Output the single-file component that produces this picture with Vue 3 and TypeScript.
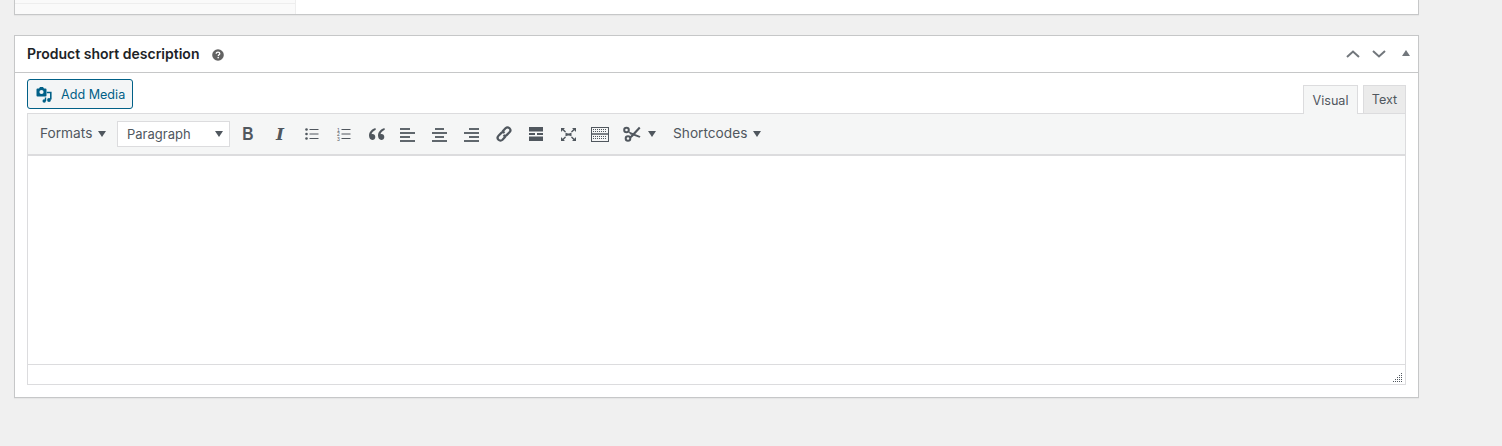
<script setup lang="ts">
  // [start x, end x] of the four rows in each align icon
  const alignRows: Record<string, number[][]> = {
    left: [[0, 10], [0, 15], [0, 10], [0, 15]],
    center: [[3, 12], [0, 15], [3, 12], [0, 15]],
    right: [[5, 15], [0, 15], [5, 15], [0, 15]]
  }
  const aligns = ['left', 'center', 'right']
</script>

<template>
  <div class="page">
    <div class="box top-box">
      <div class="top-tabs"></div>
    </div>

    <div class="box">
      <div class="box-head">
        <h2>Product short description</h2>
        <svg class="help" width="12" height="12" viewBox="0 0 12 12">
          <circle cx="6" cy="6" r="5.8" fill="#636363" />
          <path d="M4.2 4.7c0-1 .8-1.6 1.8-1.6s1.800.6 1.800 1.500c0 1.300-1.500 1.200-1.500 2.400" fill="none" stroke="#fff" stroke-width="1.3" />
          <rect x="5.500" y="7.900" width="1.400" height="1.400" fill="#fff" />
        </svg>
        <div class="head-actions">
          <svg width="14" height="8" viewBox="0 0 14 8"><path d="M1 7l6-5.500L13 7" fill="none" stroke="#72777c" stroke-width="2" /></svg>
          <svg width="14" height="8" viewBox="0 0 14 8"><path d="M1 1l6 5.500L13 1" fill="none" stroke="#72777c" stroke-width="2" /></svg>
          <span class="tri"></span>
        </div>
      </div>

      <div class="box-body">
        <div class="editor-top">
          <button class="add-media">
            <svg width="18" height="17" viewBox="0 0 18 17">
              <path d="M1.500 2.500h1.500l1-1.500h3l1 1.500h1.500a1 1 0 0 1 1 1v6a1 1 0 0 1-1 1h-8a1 1 0 0 1-1-1v-6a1 1 0 0 1 1-1z" fill="#016087" />
              <circle cx="5.500" cy="6" r="2.100" fill="#f3f5f6" />
              <path d="M10.800 6.500h4v7" fill="none" stroke="#016087" stroke-width="1.600" />
              <path d="M9.500 11.500v3.500" fill="none" stroke="#016087" stroke-width="1.400" />
              <circle cx="13" cy="14" r="1.900" fill="#016087" />
              <circle cx="8.200" cy="15" r="1.700" fill="#016087" />
            </svg>
            Add Media
          </button>
          <div class="tabs">
            <span class="tab active">Visual</span>
            <span class="tab">Text</span>
          </div>
        </div>

        <div class="editor">
          <div class="toolbar">
            <span class="menu formats">Formats<i class="caret"></i></span>
            <span class="select">Paragraph<i class="caret"></i></span>

            <span class="btn b"><span>B</span></span>
            <span class="btn i">I</span>

            <span class="btn">
              <svg width="16" height="16" viewBox="0 0 16 16">
                <circle cx="2.500" cy="3.500" r="1.300" fill="#50575e" />
                <circle cx="2.500" cy="8" r="1.300" fill="#50575e" />
                <circle cx="2.500" cy="12.500" r="1.300" fill="#50575e" />
                <path d="M5.500 3.500h9M5.500 8h9M5.500 12.500h9" stroke="#50575e" />
              </svg>
            </span>
            <span class="btn">
              <svg width="16" height="16" viewBox="0 0 16 16">
                <text x="1" y="5.600" class="num">1</text>
                <text x="1" y="10.100" class="num">2</text>
                <text x="1" y="14.600" class="num">3</text>
                <path d="M5.500 3.500h9M5.500 8h9M5.500 12.500h9" stroke="#50575e" />
              </svg>
            </span>
            <span class="btn">
              <svg width="17" height="14" viewBox="0 0 17 14">
                <path d="M7.400 1C4.200 2 1 4.600 1 8.600 1 11.400 2.500 13 4.300 13c1.700 0 3-1.300 3-3s-1.200-2.900-2.800-2.900c-.4 0-.8.100-1 .2.300-1.700 2-3.500 4.300-4.500zM16.400 1c-3.200 1-6.400 3.600-6.400 7.600 0 2.800 1.500 4.400 3.300 4.400 1.700 0 3-1.300 3-3s-1.200-2.900-2.800-2.900c-.4 0-.8.100-1 .2.300-1.700 2-3.500 4.300-4.500z" fill="#50575e" />
              </svg>
            </span>

            <span v-for="a in aligns" :key="a" class="btn">
              <svg class="align" width="15" height="14" viewBox="0 0 15 14">
                <path
                  v-for="(r, n) in alignRows[a]"
                  :key="n"
                  :d="`M${r[0]} ${1 + n * 4}H${r[1]}`"
                  stroke="#50575e"
                  stroke-width="1.800"
                />
              </svg>
            </span>

            <span class="btn">
              <svg width="18" height="18" viewBox="0 0 18 18">
                <g fill="none" stroke="#50575e" stroke-width="2.200">
                  <path d="M7.500 6.500l3-3.200c1.100-1.100 2.900-1.100 4 0s1.100 2.900 0 4l-2.600 2.600c-1 1-2.500 1-3.500.2" />
                  <path d="M10.500 11.500l-3 3.200c-1.100 1.100-2.900 1.100-4 0s-1.100-2.900 0-4l2.600-2.600c1-1 2.500-1 3.500-.2" />
                </g>
              </svg>
            </span>
            <span class="btn">
              <svg width="16" height="14" viewBox="0 0 16 14">
                <rect x="1" y="0" width="14" height="4.500" fill="#50575e" />
                <rect x="1" y="6" width="6" height="2" fill="#50575e" />
                <rect x="9" y="6" width="6" height="2" fill="#50575e" />
                <rect x="1" y="9.500" width="14" height="4.500" fill="#50575e" />
              </svg>
            </span>
            <span class="btn">
              <svg width="17" height="15" viewBox="0 0 17 15">
                <path d="M1 1h4L3.700 2.300 6 4.600 5 5.500 2.600 3.300 1 5zM16 1v4l-1.600-1.700L12 5.500l-1-.9 2.300-2.300L12 1zM1 14v-4l1.600 1.700L5 9.500l1 .9-2.300 2.300L5 14zM16 14h-4l1.300-1.300L11 10.400l1-.9 2.400 2.200L16 10z" fill="#50575e" />
                <path d="M5.500 5.500c2 1.300 4 1.300 6 0v4c-2-1.300-4-1.300-6 0z" fill="#50575e" />
              </svg>
            </span>
            <span class="btn">
              <svg width="18" height="15" viewBox="0 0 18 15">
                <rect x=".5" y=".5" width="17" height="14" fill="none" stroke="#50575e" />
                <path d="M2 2.500h14M2 4.500h14M2 9.500h14M2 11.500h14" stroke="#50575e" stroke-dasharray="1 1" />
                <path d="M1 7h16" stroke="#50575e" stroke-width="1.500" />
              </svg>
            </span>
            <span class="btn">
              <svg width="18" height="16" viewBox="0 0 18 16">
                <g fill="none" stroke="#50575e" stroke-width="2">
                  <circle cx="3.500" cy="4" r="2.300" />
                  <circle cx="5" cy="12.500" r="2.300" />
                </g>
                <path d="M5.300 5.200L17.500 10.200 16.500 11.800 7 8.200zM6.500 11L16 .8 17.500 2.200 10 10.500 7.500 12.500z" fill="#50575e" />
              </svg>
            </span>
            <i class="caret scissors-caret"></i>
            <span class="menu shortcodes">Shortcodes<i class="caret"></i></span>
          </div>

          <div class="edit-area"></div>

          <div class="status">
            <svg class="grip" width="10" height="10" viewBox="0 0 10 10" fill="#50575e">
              <rect x="8" y="0" width="1" height="1" />
              <rect x="6" y="2" width="1" height="1" /><rect x="8" y="2" width="1" height="1" />
              <rect x="4" y="4" width="1" height="1" /><rect x="6" y="4" width="1" height="1" /><rect x="8" y="4" width="1" height="1" />
              <rect x="2" y="6" width="1" height="1" /><rect x="4" y="6" width="1" height="1" /><rect x="6" y="6" width="1" height="1" /><rect x="8" y="6" width="1" height="1" />
              <rect x="0" y="8" width="1" height="1" /><rect x="2" y="8" width="1" height="1" /><rect x="4" y="8" width="1" height="1" /><rect x="6" y="8" width="1" height="1" /><rect x="8" y="8" width="1" height="1" />
            </svg>
          </div>
        </div>
      </div>
    </div>
  </div>
</template>

<style>
  html,
  body {
    background: #f0f0f0;
  }
</style>

<style scoped>
  .page {
    width: 1405px;
    height: 446px;
    margin-left: 14px;
    font-family: Inter, "Liberation Sans", sans-serif;
    font-size: 13px;
    color: #32373c;
    box-sizing: border-box;
  }

  .box {
    background: #fff;
    border: 1px solid #c6c7c8;
    box-shadow: 0 1px 1px rgba(0, 0, 0, 0.04);
  }

  .top-box {
    height: 15px;
    box-sizing: border-box;
    border-top: 0;
    margin-bottom: 20px;
  }

  .top-tabs {
    width: 281px;
    height: 14px;
    border-right: 1px solid #eee;
    box-sizing: border-box;
    background-image: linear-gradient(#fafafa 3px, #eee 3px, #eee 4px, #fafafa 4px);
  }

  .box-head {
    display: flex;
    align-items: center;
    height: 36px;
    padding: 0 8px 0 12px;
    border-bottom: 1px solid #c6c7c8;
  }

  h2 {
    margin: -2px 13px 0 0;
    font-size: 14px;
    font-weight: 600;
    color: #1d2327;
  }

  .help {
    margin-top: 1px;
  }

  .head-actions {
    display: flex;
    align-items: center;
    gap: 12px;
    margin-left: auto;
  }

  .tri {
    width: 0;
    height: 0;
    margin-left: 4px;
    margin-bottom: 3px;
    border-left: 4px solid transparent;
    border-right: 4px solid transparent;
    border-bottom: 6px solid #72777c;
  }

  .box-body {
    padding: 0 12px 12px;
  }

  .editor-top {
    display: flex;
    justify-content: space-between;
    align-items: flex-end;
    height: 40px;
  }

  .add-media {
    display: flex;
    align-items: center;
    gap: 7px;
    width: 106px;
    height: 30px;
    margin-bottom: 4px;
    padding: 0 0 0 8px;
    background: #f3f5f6;
    border: 1px solid #016087;
    border-radius: 3px;
    color: #016087;
    font: inherit;
    font-size: 12.6px;
    box-sizing: border-box;
  }

  .tabs {
    display: flex;
    gap: 5px;
  }

  .tab {
    display: flex;
    align-items: center;
    justify-content: center;
    width: 43px;
    height: 28px;
    background: #ebebeb;
    border: 1px solid #dcdcde;
    border-bottom: 0;
    color: #50575e;
    font-size: 12.6px;
    box-sizing: border-box;
  }

  .tab.active {
    position: relative;
    width: 55px;
    height: 29px;
    margin-bottom: -1px;
    background: #f5f6f6;
  }

  .editor {
    border: 1px solid #dcdcde;
    box-sizing: border-box;
  }

  .toolbar {
    display: flex;
    align-items: center;
    height: 42px;
    padding-left: 12px;
    background: #f5f6f6;
    border-bottom: 2px solid #dcdcde;
    box-sizing: border-box;
    color: #50575e;
  }

  .menu {
    display: flex;
    align-items: center;
    margin-top: -2px;
    font-size: 13.7px;
  }

  .caret {
    display: inline-block;
    width: 0;
    height: 0;
    border-left: 4px solid transparent;
    border-right: 4px solid transparent;
    border-top: 6px solid #50575e;
  }

  .formats .caret {
    margin-left: 6px;
    margin-top: 2px;
  }

  .formats {
    width: 77px;
  }

  .select {
    display: flex;
    align-items: center;
    justify-content: space-between;
    width: 113px;
    height: 26px;
    padding: 0 6px 0 9px;
    background: #fff;
    border: 1px solid #dcdcde;
    box-sizing: border-box;
    margin-right: 2px;
  }

  .btn {
    display: flex;
    align-items: center;
    justify-content: center;
    width: 32px;
    height: 26px;
  }

  .b span {
    display: block;
    font-family: "Liberation Sans", sans-serif;
    font-weight: 700;
    font-size: 19px;
    transform: scaleX(0.82);
  }

  .i {
    font-family: "DejaVu Serif", serif;
    font-weight: 700;
    font-style: italic;
    font-size: 17px;
  }

  .align {
    margin-top: 1px;
    margin-left: -1px;
  }

  .num {
    font-family: "Liberation Sans", sans-serif;
    font-size: 5px;
    fill: #50575e;
  }

  .shortcodes {
    margin-left: 17px;
  }

  .shortcodes .caret {
    margin-left: 6px;
    margin-top: 2px;
  }

  .edit-area {
    height: 208px;
    background: #fff;
    border-bottom: 1px solid #dcdcde;
  }

  .status {
    position: relative;
    height: 19px;
  }

  .grip {
    position: absolute;
    right: 2px;
    bottom: 1px;
  }
</style>
